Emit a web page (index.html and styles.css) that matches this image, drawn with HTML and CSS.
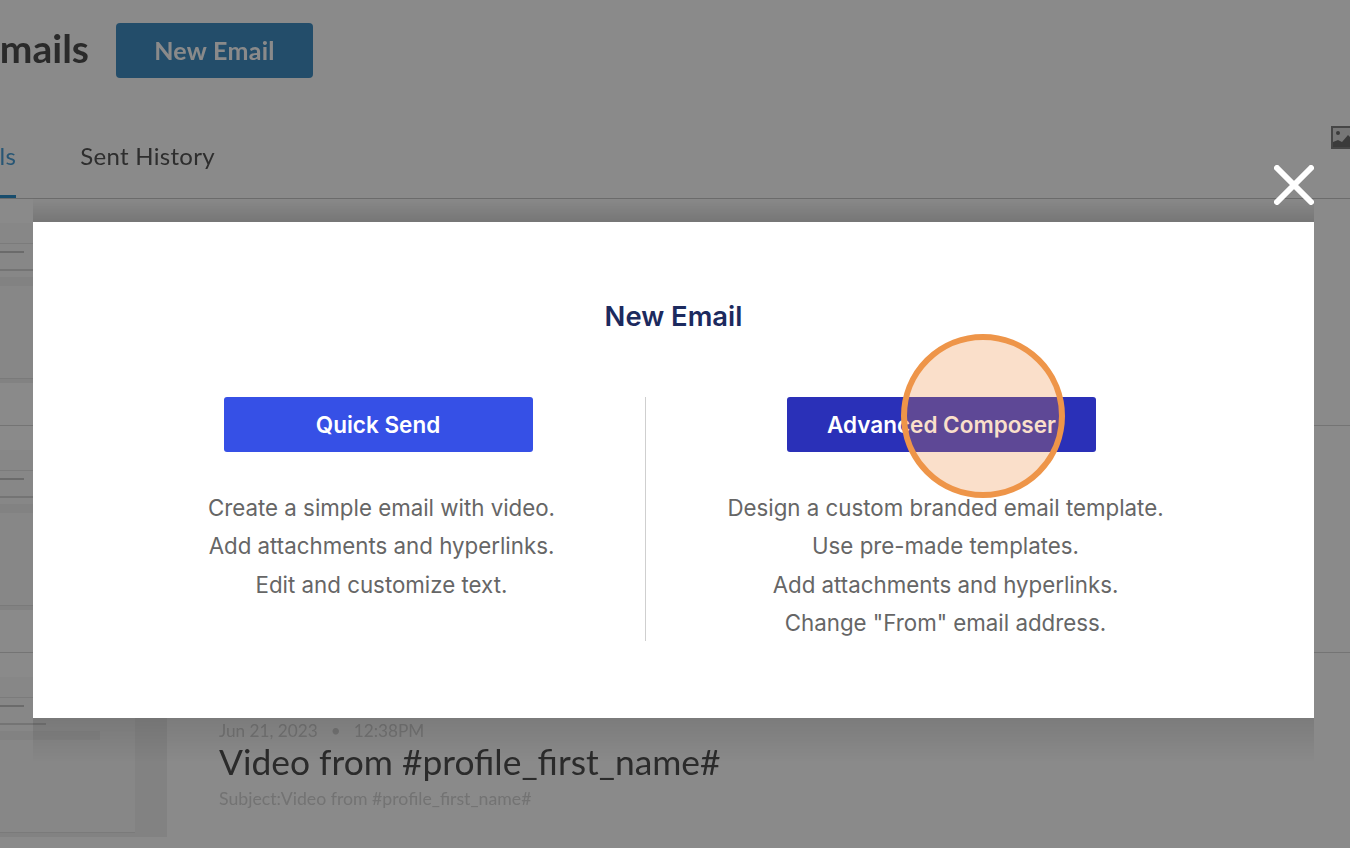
FILE: index.html
```html
<!DOCTYPE html>
<html lang="en">
<head>
    <meta charset="UTF-8" />
    <title>Emails</title>
    <link rel="stylesheet" href="styles.css">
</head>
<body>

    <!-- Page behind the dialog -->
    <div class="page">
        <div class="page-header">
            <h1 class="page-title">Emails</h1>
            <button class="new-email-btn">New Email</button>
        </div>

        <div class="tabs">
            <span class="tab tab-active">Emails</span>
            <span class="tab">Sent History</span>
            <svg class="image-icon" width="24" height="23" viewBox="0 0 24 23">
                <rect x="1" y="1" width="22" height="21" fill="#dcdcdc" stroke="#828282" stroke-width="2"/>
                <circle cx="7" cy="7" r="2" fill="#6e6e6e"/>
                <path d="M2 21v-5l5-2 4 2 6-7 6 6v6z" fill="#6e6e6e"/>
            </svg>
        </div>

        <div class="email-row">
            <div class="thumb"><div class="thumb-doc"><i class="rule"></i><i class="line line-a"></i><i class="line line-b"></i><i class="band"></i></div></div>
        </div>
        <div class="email-row">
            <div class="thumb"><div class="thumb-doc"><i class="rule"></i><i class="line line-a"></i><i class="line line-b"></i><i class="band"></i></div></div>
        </div>
        <div class="email-row">
            <div class="thumb"><div class="thumb-doc"><i class="rule"></i><i class="line line-a"></i><i class="line line-b"></i><i class="band"></i></div></div>
            <div class="email-info">
                <div class="email-date">Jun 21, 2023<span class="dot">•</span>12:38PM</div>
                <div class="email-name">Video from #profile_first_name#</div>
                <div class="email-subject">Subject:Video from #profile_first_name#</div>
            </div>
        </div>
    </div>

    <div class="overlay"></div>

    <!-- New Email dialog -->
    <div class="modal">
        <svg class="close-icon" width="40" height="40" viewBox="0 0 40 40">
            <path d="M3 3L37 37M37 3L3 37" stroke="#fff" stroke-width="6" stroke-linecap="round"/>
        </svg>

        <h2 class="modal-title">New Email</h2>

        <div class="modal-body">
            <div class="option option-left">
                <button class="option-btn btn-quick">Quick Send</button>
                <p>Create a simple email with video.</p>
                <p>Add attachments and hyperlinks.</p>
                <p>Edit and customize text.</p>
            </div>
            <div class="option option-right">
                <button class="option-btn btn-advanced">Advanced Composer</button>
                <p>Design a custom branded email template.</p>
                <p>Use pre-made templates.</p>
                <p>Add attachments and hyperlinks.</p>
                <p>Change "From" email address.</p>
            </div>
        </div>

        <div class="hotspot"></div>
    </div>

</body>
</html>
```

FILE: styles.css
```css
* {
    margin: 0;
    padding: 0;
    box-sizing: border-box;
}

html, body {
    height: 100%;
    overflow: hidden;
}

body {
    font-family: 'Lato', sans-serif;
    background: #fff;
}

.page {
    width: 1350px;
    height: 848px;
    overflow: hidden;
    filter: blur(0.6px);
}

.page-header {
    display: flex;
    align-items: center;
    gap: 27px;
    height: 101px;
}

.page-title {
    width: 103px;
    font-size: 39px;
    line-height: 46px;
    padding-bottom: 5px;
    font-weight: 700;
    color: #4e4e4e;
    margin-left: -14px;
    white-space: nowrap;
    direction: rtl;
}

.new-email-btn {
    width: 197px;
    height: 55px;
    padding-bottom: 2px;
    border: none;
    border-radius: 4px;
    background: #418fc4;
    color: #fff;
    font-family: 'Lato', sans-serif;
    font-size: 25px;
    font-weight: 700;
    letter-spacing: 0.3px;
}

.tabs {
    position: relative;
    display: flex;
    gap: 64px;
    height: 98px;
    padding-top: 40px;
    margin-left: -52.6px;
    border-bottom: 1px solid #c8c8c8;
}

.tab {
    font-size: 24px;
    letter-spacing: 0.3px;
    color: #555;
    height: 57px;
    line-height: 30px;
}

.tab-active {
    color: #4aa0d8;
    border-bottom: 3px solid #2e8fc9;
}

.image-icon {
    position: absolute;
    left: 1384px;
    top: 25px;
}

.email-row {
    display: flex;
    gap: 52px;
    height: 227px;
    border-bottom: 1px solid #d6d6d6;
}

.thumb {
    width: 167px;
    height: 160px;
    margin-top: 24px;
    background: #f0f0f0;
    flex-shrink: 0;
}

.thumb-doc {
    position: relative;
    width: 135px;
    height: 156px;
    background: #fafafa;
    border-bottom: 1px solid #e2e2e2;
}

.rule {
    display: block;
    position: absolute;
    left: 0;
    top: 20px;
    width: 100%;
    height: 1px;
    background: #e4e4e4;
}

.line {
    display: block;
    position: absolute;
    left: 0;
    height: 2px;
    background: #c6c6c6;
}

.line-a {
    top: 28px;
    width: 24px;
}

.line-b {
    top: 46px;
    width: 46px;
    background: #d6d6d6;
}

.band {
    display: block;
    position: absolute;
    left: 0;
    top: 54px;
    width: 100px;
    height: 9px;
    background: #f0f0f0;
}

.email-info {
    padding-top: 66px;
}

.email-date {
    font-size: 17.2px;
    color: #d4d4d4;
    height: 22px;
    line-height: 24px;
}

.dot {
    margin: 0 13px;
}

.email-name {
    font-size: 35.4px;
    color: #505050;
    line-height: 42px;
}

.email-subject {
    font-size: 17.7px;
    color: #d4d4d4;
    margin-top: 5px;
}

.overlay {
    position: fixed;
    inset: 0;
    background: rgba(0, 0, 0, 0.46);
}

.modal {
    position: absolute;
    left: 33px;
    top: 222px;
    width: 1281px;
    height: 496px;
    background: #fff;
    font-family: 'Inter', sans-serif;
}

/* the darker strips above and below the dialog stop at its edges */
.modal::before {
    content: "";
    position: absolute;
    left: 0;
    right: 0;
    top: -24px;
    height: 24px;
    background: linear-gradient(to bottom, rgba(0, 0, 0, 0), rgba(0, 0, 0, 0.14));
}

.modal::after {
    content: "";
    position: absolute;
    left: 0;
    right: 0;
    bottom: -44px;
    height: 44px;
    background: linear-gradient(to top, rgba(0, 0, 0, 0), rgba(0, 0, 0, 0.1));
}

.close-icon {
    position: absolute;
    right: 0;
    top: -57px;
}

.modal-title {
    padding-top: 78px;
    height: 175px;
    text-align: center;
    font-size: 27.4px;
    line-height: 33px;
    font-weight: 600;
    color: #1c2a5e;
}

.modal-body {
    display: grid;
    grid-template-columns: 534px 1fr;
    padding: 0 69px 0 78px;
}

.option {
    display: flex;
    flex-direction: column;
    align-items: center;
    height: 244px;
}

.option-left {
    padding-left: 7px;
}

.option-right {
    border-left: 1px solid #cfcfcf;
}

.option-btn {
    flex-shrink: 0;
    width: 309px;
    height: 55px;
    margin-bottom: 37px;
    border: none;
    border-radius: 3px;
    color: #fff;
    font-family: 'Inter', sans-serif;
    font-size: 22.5px;
    font-weight: 600;
}

.btn-quick {
    background: #3650e6;
    margin-left: -7px;
}

.btn-advanced {
    background: #2a30b8;
    margin-left: -8px;
}

.option p {
    font-size: 22.3px;
    line-height: 38.3px;
    color: #666;
}

.hotspot {
    position: absolute;
    left: 868px;
    top: 112px;
    width: 164px;
    height: 164px;
    border: 6px solid #ee9549;
    border-radius: 50%;
    background: rgba(237, 137, 59, 0.27);
}
```
